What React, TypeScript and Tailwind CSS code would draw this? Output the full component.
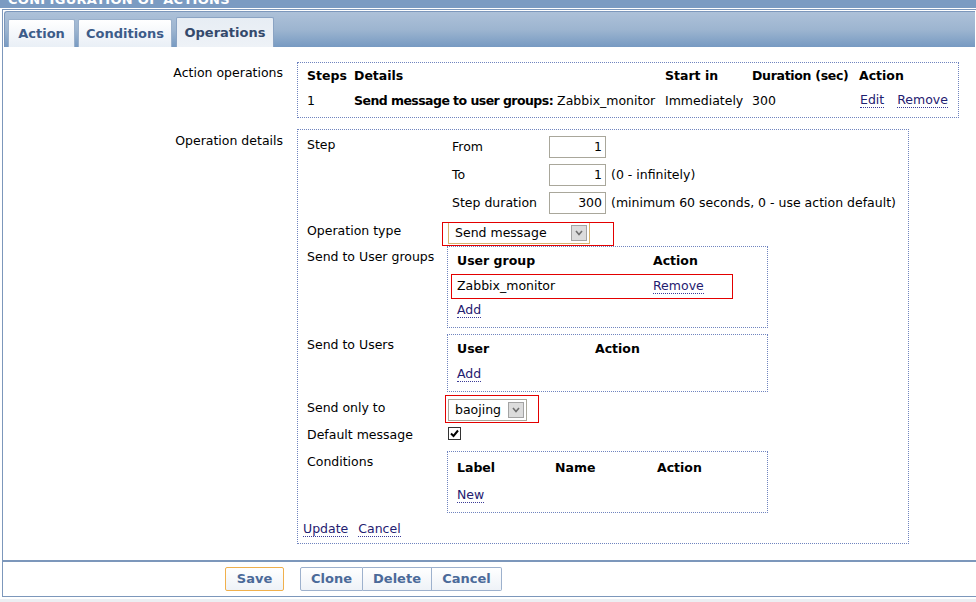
import React from "react";

function Lnk({ children }: { children: React.ReactNode }) {
  return (
    <span className="text-[#1f2070] border-b border-dotted border-[#3b3c98] leading-[14px]">
      {children}
    </span>
  );
}

function Dropdown({ value, width, focused }: { value: string; width: string; focused?: boolean }) {
  return (
    <div
      className={`${width} h-[22px] flex items-center justify-between bg-white border ${
        focused ? "border-[#d7b46e]" : "border-[#a9a79b]"
      } pl-[6px] pr-[2px]`}
    >
      <span>{value}</span>
      <span className="w-[16px] h-[16px] bg-[#dcdcdc] border border-[#a3a3a3] flex items-center justify-center">
        <svg width="8" height="6" viewBox="0 0 8 6">
          <path d="M1 1 L4 4.5 L7 1" fill="none" stroke="#6e6e6e" strokeWidth="1.6" />
        </svg>
      </span>
    </div>
  );
}

function NumInput({ value }: { value: string }) {
  return (
    <div className="w-[57px] h-[22px] border border-[#a9a79b] bg-white text-right pr-[3px] leading-[20px]">
      {value}
    </div>
  );
}

export default function App() {
  return (
    <div className="w-[976px] h-[602px] overflow-hidden bg-[#eceff3] font-['DejaVu_Sans',sans-serif] text-[12.5px] leading-[16px] text-black">
      {/* title strip, scrolled away */}
      <div className="h-[8px] bg-[#7b9bc2] overflow-hidden pl-[8px]">
        <div className="text-white font-bold text-[13px] leading-[13px] -mt-[7px] tracking-[0.3px]">
          CONFIGURATION OF ACTIONS
        </div>
      </div>

      <div className="bg-white pt-[1px] pb-[2px]">
        <div className="ml-[2px] h-[552px] border-l border-t border-b border-[#7c97bb] p-[1px] flex flex-col">
          {/* tabs */}
          <div className="h-[36px] border-t border-l border-[#7c97bb] rounded-tl-[3px] bg-gradient-to-b from-[#adc1d9] via-[#9db5d0] to-[#779ac2] flex items-end pl-[3px]">
            <div className="w-[67px] h-[28px] mr-[3px] rounded-t-[2px] border border-b-0 border-[#9ab0cb] bg-gradient-to-b from-[#ffffff] to-[#e9eff6] flex items-center justify-center font-bold text-[13px] text-[#3d5c89]">
              Action
            </div>
            <div className="w-[94px] h-[28px] mr-[4px] rounded-t-[2px] border border-b-0 border-[#9ab0cb] bg-gradient-to-b from-[#ffffff] to-[#e9eff6] flex items-center justify-center font-bold text-[13px] text-[#3d5c89]">
              Conditions
            </div>
            <div className="w-[98px] h-[30px] rounded-t-[2px] border border-b-0 border-[#8aa3c3] bg-gradient-to-b from-[#e7edf4] to-[#eef2f7] flex items-center justify-center font-bold text-[13px] text-[#34496b]">
              Operations
            </div>
          </div>

          {/* form */}
          <div className="flex-1 bg-white pt-[15px]">
            {/* Action operations */}
            <div className="flex">
              <div className="w-[279px] text-right pt-[3px]">Action operations</div>
              <div className="ml-[14px] w-[662px] h-[56px] border border-dotted border-[#7084bf] px-[9px]">
                <div className="grid grid-cols-[47px_311px_87px_107px_auto]">
                  <div className="h-[25px] flex items-center font-bold">Steps</div>
                  <div className="h-[25px] flex items-center font-bold">Details</div>
                  <div className="h-[25px] flex items-center font-bold">Start in</div>
                  <div className="h-[25px] flex items-center font-bold tracking-[-0.3px]">Duration (sec)</div>
                  <div className="h-[25px] flex items-center font-bold">Action</div>
                  <div className="h-[25px] flex items-center">1</div>
                  <div className="h-[25px] flex items-center whitespace-nowrap">
                    <span className="font-bold tracking-[-0.55px]">Send message to user groups:</span>&nbsp;Zabbix_monitor
                  </div>
                  <div className="h-[25px] flex items-center">Immediately</div>
                  <div className="h-[25px] flex items-center">300</div>
                  <div className="h-[25px] flex items-center gap-[13px] pl-[1px]">
                    <Lnk>Edit</Lnk>
                    <Lnk>Remove</Lnk>
                  </div>
                </div>
              </div>
            </div>

            {/* Operation details */}
            <div className="flex mt-[11px]">
              <div className="w-[279px] text-right pt-[4px]">Operation details</div>
              <div className="ml-[14px] w-[612px] h-[415px] border border-dotted border-[#7084bf] pl-[9px] pt-[6px]">
                {/* Step */}
                <div className="flex">
                  <div className="w-[140px] pt-[1px]">Step</div>
                  <div className="pl-[5px] flex flex-col gap-[6px]">
                    <div className="flex items-center h-[22px]">
                      <div className="w-[97px]">From</div>
                      <NumInput value="1" />
                    </div>
                    <div className="flex items-center h-[22px]">
                      <div className="w-[97px]">To</div>
                      <NumInput value="1" />
                      <span className="ml-[5px]">(0 - infinitely)</span>
                    </div>
                    <div className="flex items-center h-[22px]">
                      <div className="w-[97px]">Step duration</div>
                      <NumInput value="300" />
                      <span className="ml-[5px] whitespace-nowrap">(minimum 60 seconds, 0 - use action default)</span>
                    </div>
                  </div>
                </div>

                {/* Operation type */}
                <div className="flex mt-[8px]">
                  <div className="w-[140px] pt-[1px]">Operation type</div>
                  <div className="relative ml-[1px]">
                    <Dropdown value="Send message" width="w-[142px]" focused />
                    <div className="absolute -left-[6px] top-0 w-[172px] h-[24px] border border-[#e30000]" />
                  </div>
                </div>

                {/* Send to User groups */}
                <div className="flex mt-[2px]">
                  <div className="w-[140px] pt-[3px]">Send to User groups</div>
                  <div className="w-[321px] h-[82px] border border-dotted border-[#7084bf] pl-[9px]">
                    <div className="h-[27px] flex items-center font-bold">
                      <div className="w-[196px]">User group</div>
                      <div>Action</div>
                    </div>
                    <div className="relative h-[24px] flex items-center">
                      <div className="w-[196px]">Zabbix_monitor</div>
                      <Lnk>Remove</Lnk>
                      <div className="absolute -left-[6px] top-0 w-[282px] h-[25px] border border-[#e30000]" />
                    </div>
                    <div className="h-[24px] flex items-center">
                      <Lnk>Add</Lnk>
                    </div>
                  </div>
                </div>

                {/* Send to Users */}
                <div className="flex mt-[6px]">
                  <div className="w-[140px] pt-[3px]">Send to Users</div>
                  <div className="w-[321px] h-[58px] border border-dotted border-[#7084bf] pl-[9px]">
                    <div className="h-[27px] flex items-center font-bold">
                      <div className="w-[138px]">User</div>
                      <div>Action</div>
                    </div>
                    <div className="h-[24px] flex items-center">
                      <Lnk>Add</Lnk>
                    </div>
                  </div>
                </div>

                {/* Send only to */}
                <div className="flex mt-[7px]">
                  <div className="w-[140px] pt-[1px]">Send only to</div>
                  <div className="relative ml-[1px]">
                    <Dropdown value="baojing" width="w-[79px]" />
                    <div className="absolute -left-[3px] -top-[4px] w-[94px] h-[28px] border border-[#e30000]" />
                  </div>
                </div>

                {/* Default message */}
                <div className="flex mt-[5px]">
                  <div className="w-[140px] pt-[1px]">Default message</div>
                  <div className="ml-[1px] mt-[1px] w-[13px] h-[13px] border border-[#333] bg-white flex items-center justify-center">
                    <svg width="11" height="11" viewBox="0 0 11 11">
                      <path d="M2 5.5 L4.5 8 L9 2.5" fill="none" stroke="#000" strokeWidth="2" />
                    </svg>
                  </div>
                </div>

                {/* Conditions */}
                <div className="flex mt-[8px]">
                  <div className="w-[140px] pt-[3px]">Conditions</div>
                  <div className="w-[321px] h-[62px] border border-dotted border-[#7084bf] pl-[9px]">
                    <div className="h-[31px] flex items-center font-bold">
                      <div className="w-[98px]">Label</div>
                      <div className="w-[102px]">Name</div>
                      <div>Action</div>
                    </div>
                    <div className="h-[24px] flex items-center">
                      <Lnk>New</Lnk>
                    </div>
                  </div>
                </div>

                <div className="flex gap-[10px] mt-[9px] -ml-[4px]">
                  <Lnk>Update</Lnk>
                  <Lnk>Cancel</Lnk>
                </div>
              </div>
            </div>
          </div>
        </div>

        {/* footer buttons */}
        <div className="ml-[2px] mt-[0px] h-[36px] border-l border-t border-b border-[#7c97bb] bg-white flex items-start pt-[5px] pl-[222px]">
          <div className="w-[59px] h-[24px] border border-[#f0b04c] rounded-[2px] bg-gradient-to-b from-[#ffffff] to-[#eef2f7] flex items-center justify-center font-bold text-[13px] text-[#4b6a99]">
            Save
          </div>
          <div className="ml-[16px] flex">
            <div className="w-[63px] h-[24px] border border-[#9db1cd] rounded-l-[2px] bg-gradient-to-b from-[#ffffff] to-[#eef2f7] flex items-center justify-center font-bold text-[13px] text-[#4b6a99]">
              Clone
            </div>
            <div className="w-[69px] h-[24px] border border-l-0 border-[#9db1cd] bg-gradient-to-b from-[#ffffff] to-[#eef2f7] flex items-center justify-center font-bold text-[13px] text-[#4b6a99]">
              Delete
            </div>
            <div className="w-[70px] h-[24px] border border-l-0 border-[#9db1cd] rounded-r-[2px] bg-gradient-to-b from-[#ffffff] to-[#eef2f7] flex items-center justify-center font-bold text-[13px] text-[#4b6a99]">
              Cancel
            </div>
          </div>
        </div>
      </div>
    </div>
  );
}
